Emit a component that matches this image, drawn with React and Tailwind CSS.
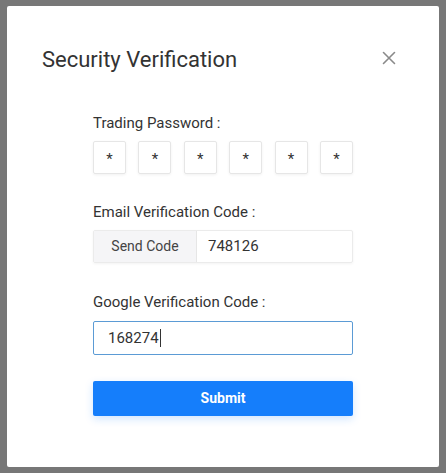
import React from "react";

export default function App() {
  const font = { fontFamily: "Roboto, 'Noto Sans', sans-serif" };
  return (
    <div className="h-[473px] w-[446px] bg-[#777777] pt-[6px] pl-[7px]" style={font}>
      <div className="w-[432px] h-[461px] bg-white rounded-[2px] flex flex-col">
        <div className="flex items-center justify-between pl-[35px] pr-[43px] pt-[40px]">
          <h1 className="text-[22px] leading-[28px] text-[#333]">Security Verification</h1>
          <svg width="14" height="14" viewBox="0 0 14 14" className="mb-[5px]">
            <path d="M1.5 1.5 L12.5 12.5 M12.5 1.5 L1.5 12.5" stroke="#8a8a8a" strokeWidth="1.6" strokeLinecap="round" />
          </svg>
        </div>
        <div className="w-[260px] mx-auto mt-[39px] flex flex-col">
          <div className="text-[15px] leading-[20px] text-[#333]">Trading Password :</div>
          <div className="mt-[8px] flex justify-between">
            {[0, 1, 2, 3, 4, 5].map((i) => (
              <div key={i} className="w-[33px] h-[33px] border border-[#e6e6e6] rounded-[2px] shadow-[0_1px_3px_rgba(0,0,0,0.06)] flex items-center justify-center text-[15px] text-[#333] pt-[3px]">
                *
              </div>
            ))}
          </div>
          <div className="mt-[28px] text-[15px] leading-[20px] text-[#333]">Email Verification Code :</div>
          <div className="mt-[8px] h-[33px] flex border border-[#ebebeb] rounded-[2px] shadow-[0_1px_3px_rgba(0,0,0,0.05)]">
            <div className="w-[103px] bg-[#f5f5f7] border-r border-[#e6e6e6] flex items-center justify-center text-[14px] text-[#444]">Send Code</div>
            <div className="flex-1 flex items-center pl-[11px] text-[15px] text-[#333]">748126</div>
          </div>
          <div className="mt-[29px] text-[15px] leading-[20px] text-[#333]">Google Verification Code :</div>
          <div className="mt-[9px] h-[34px] flex items-center border border-[#5b9bd5] rounded-[2px] pl-[14px] text-[15px] text-[#333]">
            168274<span className="inline-block w-[1px] h-[18px] bg-[#333] ml-[1px]" />
          </div>
          <button className="mt-[26px] h-[35px] w-full bg-[#157efb] rounded-[2px] text-white text-[14px] font-bold shadow-[0_3px_8px_rgba(21,126,251,0.2)]">
            Submit
          </button>
        </div>
      </div>
    </div>
  );
}
